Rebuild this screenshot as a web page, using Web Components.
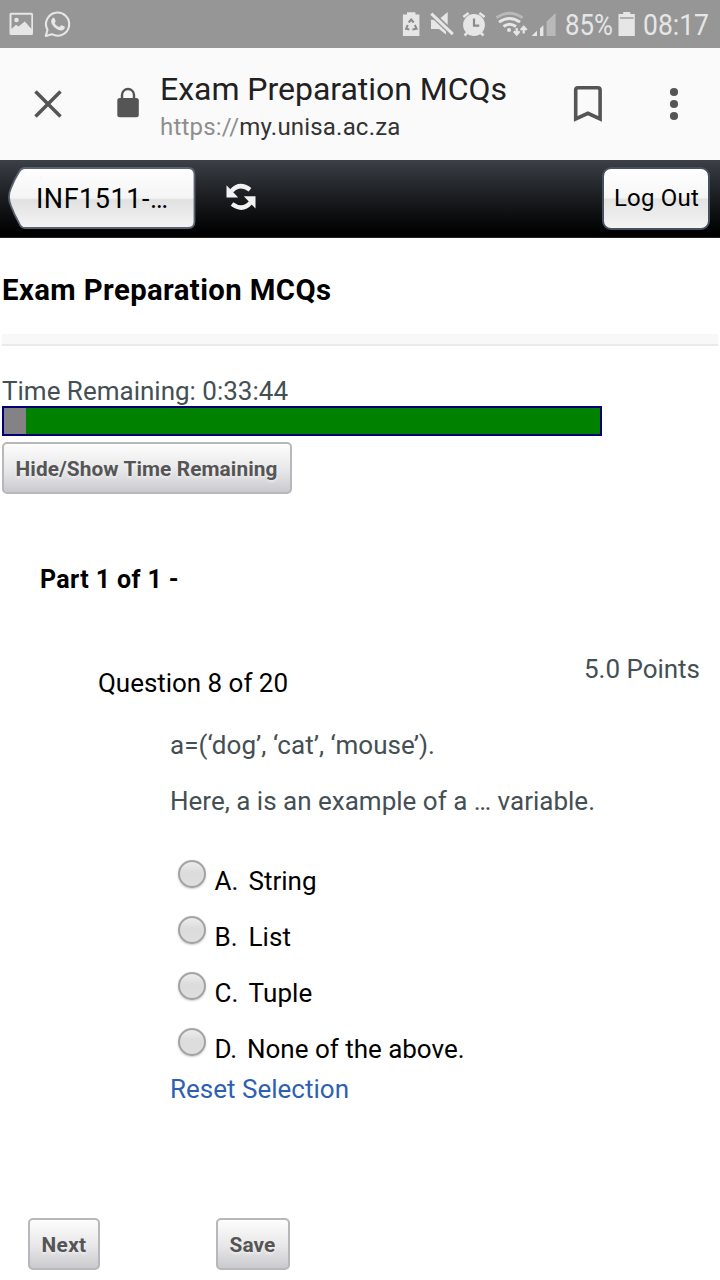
<!DOCTYPE html>
<html lang="en">
<head>
<meta charset="utf-8">
<title>Exam Preparation MCQs</title>
<style>
html,body{margin:0;padding:0;background:#fff}
body{width:720px;height:1280px;overflow:hidden;font-family:Roboto,"Liberation Sans",sans-serif;color:#000}
</style>
</head>
<body>
<exam-app></exam-app>
<script>
const define = (name, html, after) => {
  const t = document.createElement('template');
  t.innerHTML = html;
  customElements.define(name, class extends HTMLElement {
    constructor() {
      super();
      this.attachShadow({mode: 'open'}).append(t.content.cloneNode(true));
    }
    connectedCallback() { if (after) after(this, this.shadowRoot); }
  });
};

/* One line of text set to an exact width, by tracking or by condensing. */
define('fit-text', `<style>
:host{display:block;white-space:pre;flex:none}
span{display:inline-block;transform-origin:0 50%;white-space:pre}
</style><span><slot></slot></span>`, (el, root) => {
  const w = +el.getAttribute('w'), s = root.querySelector('span');
  el.style.width = w + 'px';
  const natural = s.getBoundingClientRect().width;
  if (el.hasAttribute('condense')) s.style.transform = `scaleX(${w / natural})`;
  else s.style.letterSpacing = (w - natural) / el.textContent.length + 'px';
});

define('status-bar', `<style>
:host{display:flex;box-sizing:border-box;height:48px;background:#969696;color:#e6e6e6;font-size:30px;line-height:50px}
svg{display:block;flex:none}
</style>
<svg width="565" height="48" viewBox="0 0 565 48" fill="#e6e6e6">
 <path fill-rule="evenodd" d="M11 12.700h20.500a1.500 1.500 0 0 1 1.500 1.500v19.300a1.500 1.500 0 0 1-1.500 1.500h-20.500a1.500 1.500 0 0 1-1.500-1.500v-19.300a1.500 1.500 0 0 1 1.500-1.500zM11.500 14.700v14.300l4.500-4.300 2.500 1.800 6.300-5 6.500 7.200v-14z"/>
 <circle cx="16.500" cy="20" r="2.300"/>
 <path d="M45.800 35.900l1.700-6.100a11.600 11.600 0 1 1 4.400 4.400z" fill="none" stroke="#e6e6e6" stroke-width="2.100" stroke-linejoin="round"/>
 <path d="M52.500 18.200c.8-.6 1.700-.6 2.100.3l1 2.400c.2.600-.3 1.200-1 2 1 2 2.700 3.500 4.900 4.200l1.500-1.700c.5-.3.9-.2 1.300 0l2.200 1.200c.5.300.3 1.400 0 2-.6 1.400-2.400 2-4 1.800-4.600-.7-8.600-4.500-9.300-8.300-.2-1.500.4-3.100 1.300-3.900z"/>
 <path d="M402.900 14.500h4.100v-2.300h8.400v2.300h4v21.600h-16.500z"/>
 <g fill="none" stroke="#8b8b8b" stroke-width="2"><path d="M408.700 22.500l2.500-3 2.500 3M407.800 25l-1.700 3.800 3.300.7M414.800 25l1.800 3.800-4.200.7"/></g>
 <path d="M431 19.700h4.500l10.500 6.500v8.300l-7-5.500h-8zM440 18.500l7.700-6.500v13.500z"/>
 <path d="M431.300 13.300l21.500 20.600" stroke="#969696" stroke-width="6"/><path d="M431.300 13.600l21.500 20.600" stroke="#e6e6e6" stroke-width="3"/>
 <circle cx="474" cy="25" r="10.900"/>
 <path d="M463.300 17l5.300-4M484.700 17l-5.300-4M468 32l-3.500 3.500M480 32l3.500 3.500" stroke="#e6e6e6" stroke-width="2.500"/>
 <path d="M474 18.500v7.200h5.200" stroke="#8b8b8b" stroke-width="2.200" fill="none"/>
 <g fill="none" stroke-width="2.900"><path d="M496.500 17.800q13-9 26 0" stroke="#b9b9b9"/><path d="M499 22.200q10.500-7.600 21 0M503.500 26.500q6-4.600 12.500 0" stroke="#e6e6e6"/></g>
 <circle cx="509" cy="30" r="2"/>
 <path d="M516.700 28v6M513.800 31.300l2.900 3.200 2.900-3.200M523.700 33.500v-6M520.700 30l3-3.200 3 3.200" fill="none" stroke="#e6e6e6" stroke-width="2.200"/>
 <path d="M531.500 36l5.500-5.200v5.200zM540 28.600l3.400-3.300v10.700h-3.400z"/>
 <path d="M546.600 21.500l9-8.500v23h-9z" fill="#b9b9b9"/>
</svg>
<fit-text w="48" condense>85%</fit-text>
<svg width="30" height="48" viewBox="0 0 30 48"><path d="M5.500 14h4.700v-2h7v2h4.600v22h-16.300z" fill="#e6e6e6"/><path d="M7 17h13.500v2h-13.500z" fill="#b0b0b0"/></svg>
<fit-text w="66" condense>08:17</fit-text>`);

define('browser-bar', `<style>
:host{display:flex;height:112px;background:#fafafa}
svg{display:block;flex:none}
.t{width:400px;padding-top:22px;box-sizing:border-box}
.n{font-size:32px;line-height:38px;color:#212121}
.u{font-size:24px;line-height:38px;color:#333}
.u i{font-style:normal;color:#8e8e8e}
</style>
<svg width="160" height="112" viewBox="0 0 160 112"><path d="M35.500 43.500l25 25M60.500 43.500l-25 25" stroke="#555" stroke-width="3.500"/>
<path d="M122 52v-5a6 6 0 0 1 12 0v5" fill="none" stroke="#555" stroke-width="2.400"/><rect x="117.300" y="50" width="21.500" height="19.200" rx="2.500" fill="#555"/></svg>
<div class="t"><fit-text class="n" w="347">Exam Preparation MCQs</fit-text><fit-text class="u" w="240.500"><i>https://</i>my.unisa.ac.za</fit-text></div>
<svg width="160" height="112" viewBox="560 0 160 112"><path d="M575.700 71v-29q0-2.200 2.200-2.200h20q2.200 0 2.200 2.200v29l-12.200-5.700z" fill="none" stroke="#555" stroke-width="3.600"/><g fill="#555"><circle cx="674" cy="44" r="4.100"/><circle cx="674" cy="56" r="4.100"/><circle cx="674" cy="68" r="4.100"/></g></svg>`);

define('site-nav', `<style>
:host{display:flex;justify-content:space-between;box-sizing:border-box;height:78px;padding:7px 10px 0 8px;background:linear-gradient(#3c4047 0,#23262a 35%,#08090a 80%,#000 95%);border-bottom:1px solid #222}
.l{display:flex}
.back{display:grid;grid-template:64px/188px}
.back>*{grid-area:1/1}
.back fit-text{margin-left:28px;font-size:27px;line-height:64px}
.out{box-sizing:border-box;width:108px;height:63px;padding-left:10px;border:2px solid #46505e;border-radius:9px;background:linear-gradient(#fff 0,#f6f6f6 49%,#e3e3e3 51%,#f3f3f3 100%);font-size:24px;line-height:58px}
svg{display:block}
</style>
<div class="l"><div class="back"><svg width="188" height="64" viewBox="0 0 188 64"><defs><linearGradient id="g" x2="0" y2="1"><stop stop-color="#fff"/><stop offset=".5" stop-color="#f4f4f4"/><stop offset=".53" stop-color="#e1e1e1"/><stop offset="1" stop-color="#f4f4f4"/></linearGradient></defs><path d="M17 1h163q6.500 0 6.500 6.500v47q0 6.500-6.500 6.500h-163q-4 0-6-5-5-9-8-17-4-9 0-18 3-8 8-16 2-4 6-4z" fill="url(#g)" stroke="#596371" stroke-width="1.800"/></svg><fit-text w="132.500">INF1511-…</fit-text></div>
<svg width="70" height="64" viewBox="0 0 70 64"><g fill="#f2f2f2"><path d="M30.500 18.300v12.200h11.700z"/><path d="M59.500 41.500v-12.200h-11.700z"/></g><g fill="none" stroke="#f2f2f2" stroke-width="4.400"><path d="M35.500 24q8-9 18.500-1.300"/><path d="M54.500 35.800q-8 9-18.500 1.300"/></g></svg></div>
<div class="out"><fit-text w="85">Log Out</fit-text></div>`);

define('gloss-button', `<style>
:host{display:block}
button{display:block;box-sizing:border-box;width:100%;height:52px;margin:0;padding:0 0 0 11.500px;border:2px solid #b8b8bc;border-radius:5px;background:linear-gradient(#fdfdfd,#e7e7e9 55%,#cacace);font:700 20.800px/50px Roboto,sans-serif;color:#555;text-align:left;text-shadow:0 2px 3px #fff8}
</style><button><slot></slot></button>`);

define('time-bar', `<style>
:host{display:block;box-sizing:border-box;width:600px;height:30px;border:2px solid #000074;background:linear-gradient(90deg,#848284 22px,#008200 22px)}
</style>`);

define('quiz-header', `<style>
:host{display:block;height:324px;padding:0 2px;box-sizing:border-box}
h1{margin:0;height:96px;padding-top:32px;box-sizing:border-box;font-size:29.300px;line-height:40px;font-weight:700}
hr{margin:0;border:0;box-sizing:border-box;height:12px;background:#f8f8f8;border-bottom:2px solid #ebebeb}
.time{margin-top:29px;height:31px;font-size:26px;line-height:32px;color:#444f54}
gloss-button{width:290px;margin-top:6px}
</style><h1><fit-text w="329.500">Exam Preparation MCQs</fit-text></h1><hr>
<div class="time"><fit-text w="286">Time Remaining: 0:33:44</fit-text></div>
<time-bar></time-bar><gloss-button><fit-text w="262">Hide/Show Time Remaining</fit-text></gloss-button>`);

define('answer-option', `<style>
:host{display:flex;height:56px;padding-left:8px;font-size:26px;line-height:56px}
i{box-sizing:border-box;width:28px;height:28px;margin:7px 8.500px 0 0;border:2px solid #a3a3a3;border-radius:50%;background:linear-gradient(#ececec,#dcdcdc 45%,#dedede);box-shadow:0 1px 2px #0003}
b{font-weight:400;flex:none;width:34px}
</style><i></i><b><slot name="key"></slot></b><slot></slot>`);

define('quiz-question', `<style>
:host{display:block;height:656px;font-size:26px}
.part{margin-left:40px;height:70px;font-weight:700;font-size:25px;line-height:36px}
.head{display:flex;justify-content:space-between;padding:0 20px 0 98px;line-height:36px;height:69px}
.head>:first-child{margin-top:33px}
.head>:last-child{margin-top:19px;color:#444f54}
.body{padding:26px 0 0 170px}
.body>fit-text{height:56px;line-height:36px;color:#444f54}
.body>.reset{line-height:34px;color:#2f5fb3}
.opts{padding-top:14px;height:219px}
</style>
<fit-text class="part" w="139">Part 1 of 1 -</fit-text>
<div class="head"><fit-text w="190">Question 8 of 20</fit-text><fit-text w="116">5.0 Points</fit-text></div>
<div class="body"><fit-text w="265">a=(‘dog’, ‘cat’, ‘mouse’).</fit-text><fit-text w="425">Here, a is an example of a … variable.</fit-text>
<div class="opts"><answer-option><span slot="key">A.</span><fit-text w="68">String</fit-text></answer-option><answer-option><span slot="key">B.</span><fit-text w="42.500">List</fit-text></answer-option><answer-option><span slot="key">C.</span><fit-text w="64">Tuple</fit-text></answer-option><answer-option><span slot="key">D.</span><fit-text style="margin-left:-1.500px" w="217.500">None of the above.</fit-text></answer-option></div>
<fit-text class="reset" w="179">Reset Selection</fit-text></div>`);

define('quiz-actions', `<style>
:host{display:flex;padding-left:28px;gap:116px}
.n{width:72px}.s{width:74px}
</style><gloss-button class="n"><fit-text w="45">Next</fit-text></gloss-button><gloss-button class="s"><fit-text w="46">Save</fit-text></gloss-button>`);

define('exam-app', `<style>:host{display:flex;flex-direction:column;height:1280px}</style>
<status-bar></status-bar><browser-bar></browser-bar><site-nav></site-nav><quiz-header></quiz-header><quiz-question></quiz-question><quiz-actions></quiz-actions>`);
</script>
</body>
</html>
